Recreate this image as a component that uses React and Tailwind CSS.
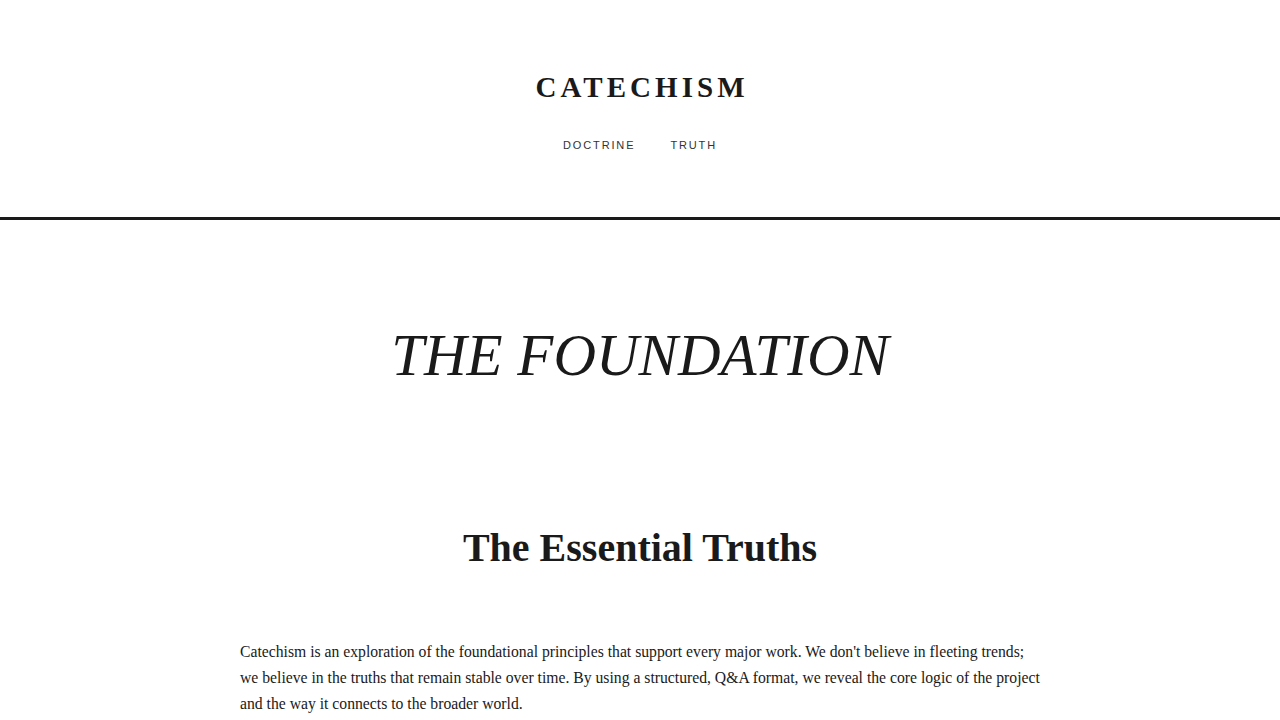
export default function App() {
  const serif = { fontFamily: '"Liberation Serif", "DejaVu Serif", serif' };
  return (
    <div className="min-h-screen bg-white text-[#1a1a1a]" style={serif}>
      <header className="flex flex-col items-center border-b-[3px] border-[#1a1a1a] pt-[73px] pb-[66px]">
        <h1 className="text-[29px] font-bold leading-none tracking-[0.14em] pl-[0.14em]">CATECHISM</h1>
        <nav className="mt-[38px] flex gap-[35px] text-[11px] leading-none tracking-[0.17em] text-[#333]" style={{ fontFamily: '"Liberation Sans", Arial, sans-serif' }}>
          <a>DOCTRINE</a>
          <a>TRUTH</a>
        </nav>
      </header>
      <main className="mx-auto max-w-[800px]">
        <h2 className="mt-[106px] text-center text-[59px] italic leading-none">THE FOUNDATION</h2>
        <h3 className="mt-[143px] text-center text-[40px] font-bold leading-none">The Essential Truths</h3>
        <p className="mt-[71px] text-[15.7px] leading-[26px] whitespace-nowrap">
          Catechism is an exploration of the foundational principles that support every major work. We don't believe in fleeting trends;<br />
          we believe in the truths that remain stable over time. By using a structured, Q&amp;A format, we reveal the core logic of the project<br />
          and the way it connects to the broader world.
        </p>
      </main>
    </div>
  );
}
